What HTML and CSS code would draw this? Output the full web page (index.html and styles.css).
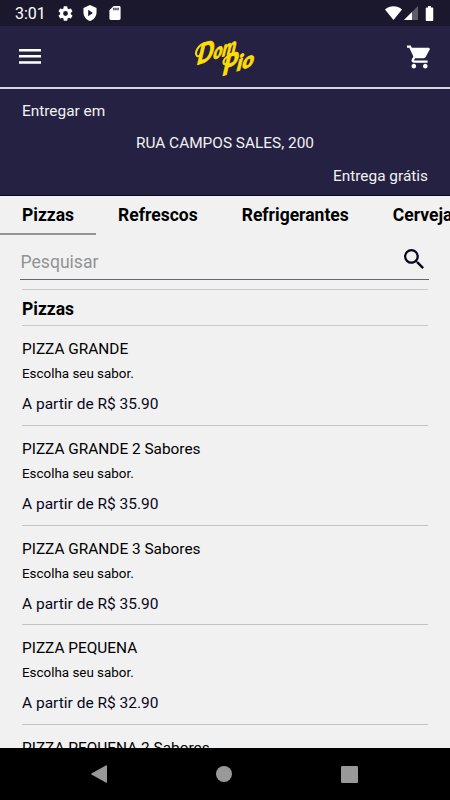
FILE: index.html
```html
<!DOCTYPE html>
<html lang="pt-BR">
<head>
<meta charset="utf-8">
<title>Dom Pio</title>
<link rel="stylesheet" href="styles.css">
</head>
<body>
<div class="phone">
  <div class="status">
    <span class="clock">3:01</span>
    <svg class="gear" viewBox="2 2 20 20"><path d="M19.14 12.94c.04-.3.06-.61.06-.94s-.02-.64-.07-.94l2.03-1.58a.49.49 0 0 0 .12-.61l-1.92-3.32a.49.49 0 0 0-.59-.22l-2.39.96a7 7 0 0 0-1.62-.94l-.36-2.54A.48.48 0 0 0 13.920 2.400h-3.840a.48.48 0 0 0-.47.41l-.36 2.540c-.59.24-1.130.57-1.620.94l-2.390-.96a.48.48 0 0 0-.59.22L2.740 8.870a.47.47 0 0 0 .12.61l2.030 1.580a6 6 0 0 0 0 1.880l-2.030 1.580a.49.49 0 0 0-.12.61l1.920 3.320c.12.22.37.29.59.22l2.390-.96c.5.38 1.030.7 1.620.94l.36 2.540c.05.24.24.41.48.41h3.840c.24 0 .44-.17.47-.41l.36-2.540a7 7 0 0 0 1.620-.94l2.390.96c.22.08.47 0 .59-.22l1.920-3.320a.47.47 0 0 0-.12-.61zM12 15.200A3.200 3.200 0 1 1 12 8.800a3.200 3.200 0 0 1 0 6.400z"/></svg>
    <svg class="shield" viewBox="3 1 18 22"><path fill-rule="evenodd" d="M12 1 3 5v6c0 5.550 3.840 10.740 9 12 5.160-1.260 9-6.450 9-12V5zM9.500 7.500v9l6.500-4.500z"/></svg>
    <svg class="card" viewBox="4 2 16 20"><path fill-rule="evenodd" d="M18 2h-8L4 8v12c0 1.100.9 2 2 2h12c1.100 0 2-.9 2-2V4c0-1.100-.9-2-2-2zM9.500 4.500V8h1.800V4.500zm3 0V8h1.800V4.500zm3 0V8h1.800V4.500z"/></svg>
    <span class="grow"></span>
    <svg class="wifi" viewBox="0 0 17 14"><path d="M0 3.500C5-.9 12-.9 17 3.500L8.500 14z"/></svg>
    <svg class="signal" viewBox="0 0 14 14"><path opacity=".3" d="M14 0v14H0z"/><path d="M8 6v8H0z"/></svg>
    <svg class="battery" viewBox="7 2 10 20"><path d="M15.670 4H14V2h-4v2H8.330C7.600 4 7 4.600 7 5.330v15.330C7 21.400 7.600 22 8.330 22h7.330c.74 0 1.340-.6 1.340-1.330V5.330C17 4.600 16.400 4 15.670 4z"/></svg>
  </div>
  <header class="bar">
    <svg class="menu" viewBox="0 0 22 15"><path d="M0 0h22v2.500H0zM0 6.100h22v2.500H0zM0 12.200h22v2.500H0z"/></svg>
    <svg class="logo" viewBox="0 0 66 44"><text class="brand" transform="translate(5.500 30) rotate(-18) skewX(-26)"><tspan class="cap" textLength="17" lengthAdjust="spacingAndGlyphs">D</tspan><tspan textLength="24" lengthAdjust="spacingAndGlyphs">om</tspan></text><text class="brand" transform="translate(31 41) rotate(-18) skewX(-26)"><tspan class="cap" textLength="15" lengthAdjust="spacingAndGlyphs">P</tspan><tspan textLength="18" lengthAdjust="spacingAndGlyphs">io</tspan></text><path class="swash" d="M15 8C8 9 3 17 6 21q3 1 4-3M40 20c-5 1-9 6-7 9q2 1 4-2"/></svg>
    <svg class="cart" viewBox="1 2 21 20"><path d="M7 18c-1.100 0-1.990.9-1.990 2S5.900 22 7 22s2-.9 2-2-.9-2-2-2zM1 2v2h2l3.600 7.590-1.350 2.450c-.16.28-.25.61-.25.96 0 1.100.9 2 2 2h12v-2H7.420c-.14 0-.25-.11-.25-.25l.03-.12.9-1.630h7.450c.75 0 1.410-.41 1.750-1.030l3.580-6.490A1 1 0 0 0 20 4H5.210l-.94-2zm16 16c-1.100 0-1.990.9-1.990 2s.89 2 1.990 2 2-.9 2-2-.9-2-2-2z"/></svg>
  </header>
  <section class="address">
    <p>Entregar em</p>
    <p class="street">RUA CAMPOS SALES, 200</p>
    <p class="fee">Entrega grátis</p>
  </section>
  <nav class="tabs">
    <span class="tab active">Pizzas</span><span class="tab">Refrescos</span><span class="tab">Refrigerantes</span><span class="tab">Cervejas</span>
  </nav>
  <div class="search">
    <span>Pesquisar</span>
    <svg viewBox="3 3 17.500 17.500"><path d="M15.500 14h-.79l-.28-.27A6.470 6.470 0 0 0 16 9.500 6.500 6.500 0 1 0 9.500 16c1.610 0 3.090-.59 4.230-1.570l.27.28v.79l5 4.990L20.490 19zm-6 0a4.500 4.500 0 1 1 0-9 4.500 4.500 0 0 1 0 9z"/></svg>
  </div>
  <main class="list">
    <h2>Pizzas</h2>
    <article><h3>PIZZA GRANDE</h3><p class="desc">Escolha seu sabor.</p><p class="price">A partir de R$ 35.90</p></article>
    <article><h3>PIZZA GRANDE 2 Sabores</h3><p class="desc">Escolha seu sabor.</p><p class="price">A partir de R$ 35.90</p></article>
    <article><h3>PIZZA GRANDE 3 Sabores</h3><p class="desc">Escolha seu sabor.</p><p class="price">A partir de R$ 35.90</p></article>
    <article><h3>PIZZA PEQUENA</h3><p class="desc">Escolha seu sabor.</p><p class="price">A partir de R$ 32.90</p></article>
    <article><h3>PIZZA PEQUENA 2 Sabores</h3></article>
  </main>
  <footer class="nav">
    <svg viewBox="0 0 16 18"><path d="M16 .8v16.400q0 .8-.8.500L.5 9.500q-.6-.5 0-1L15.200.3q.8-.3.8.5z"/></svg>
    <svg viewBox="0 0 16 16"><circle cx="8" cy="8" r="8"/></svg>
    <svg class="square" viewBox="0 0 17 17"><rect width="17" height="17" rx="1.300"/></svg>
  </footer>
</div>
</body>
</html>
```

FILE: styles.css
```css
* { box-sizing: border-box; margin: 0; padding: 0; }
body { font-family: Roboto, sans-serif; font-size: 15.4px; color: #000; background: #f1f1f1; }
svg { display: block; fill: #fff; flex: none; }
.phone { width: 450px; height: 800px; display: flex; flex-direction: column; overflow: hidden; }
.phone > * { flex: none; }
.status { height: 26px; background: #1b182d; color: #fff; display: flex; align-items: center; padding: 0 16px 0 15px; }
.clock { font-size: 16px; width: 43px; line-height: 26px; padding-top: 2px; }
.gear { width: 15px; height: 15px; margin-right: 10px; }
.shield { width: 14px; height: 16px; margin-right: 12px; }
.card { width: 12px; height: 14px; }
.grow { flex: 1; }
.wifi { width: 17px; height: 14px; margin-right: 2px; }
.signal { width: 14px; height: 14px; margin-right: 7px; }
.battery { width: 9px; height: 15px; }
.bar { height: 63px; background: #252143; display: flex; align-items: center; justify-content: space-between; padding: 0 19px; border-bottom: 2px solid #d9d8de; }
.menu { width: 22px; height: 15px; }
.logo { width: 66px; height: 44px; overflow: visible; }
.brand { font-family: Lato, sans-serif; font-weight: 900; font-style: italic; font-size: 20px; fill: #fddd04; stroke: #fddd04; stroke-width: .7px; }
.cap { font-size: 26px; }
.swash { fill: none; stroke: #fddd04; stroke-width: 2px; stroke-linecap: round; }
.cart { width: 24px; height: 24px; }
.address { height: 107px; background: #252143; color: #f1f1f1; padding: 6px 22px 0; line-height: 32.3px; border-bottom: 1px solid #08061a; }
.street { text-align: center; }
.fee { text-align: right; }
.tabs { height: 39px; display: flex; overflow: hidden; font-weight: 700; font-size: 17.5px; line-height: 38px; }
.tab { padding: 0 22px; flex: none; }
.active { border-bottom: 2px solid #949494; }
.search { height: 45px; margin: 0 21px 9px 20px; border-bottom: 1.500px solid #67636f; display: flex; justify-content: space-between; padding-right: 5px; padding-left: .5px; color: #939393; font-size: 17.6px; line-height: 54px; }
.search svg { width: 20px; height: 20px; margin-top: 14px; fill: #08061a; }
.list { height: 459px; margin: 0 22px; border-top: 1px solid #c9c9c9; overflow: hidden; }
.list h2 { font-size: 17.5px; line-height: 38px; height: 36px; border-bottom: 1px solid #c9c9c9; }
article { height: 99.75px; padding-top: 12px; border-bottom: 1px solid #c4c4c4; }
article h3 { font-size: 15.4px; font-weight: 400; line-height: 22px; }
.desc { font-size: 13.4px; line-height: 18px; margin-top: 5px; }
.price { font-size: 15.5px; line-height: 22px; margin-top: 10px; color: #08061a; }
.nav { height: 52px; background: #000; display: flex; justify-content: space-between; align-items: center; padding: 0 92px 0 91px; }
.nav svg { width: 16px; height: 18px; fill: #999; }
.nav .square { width: 17px; height: 17px; }
```
